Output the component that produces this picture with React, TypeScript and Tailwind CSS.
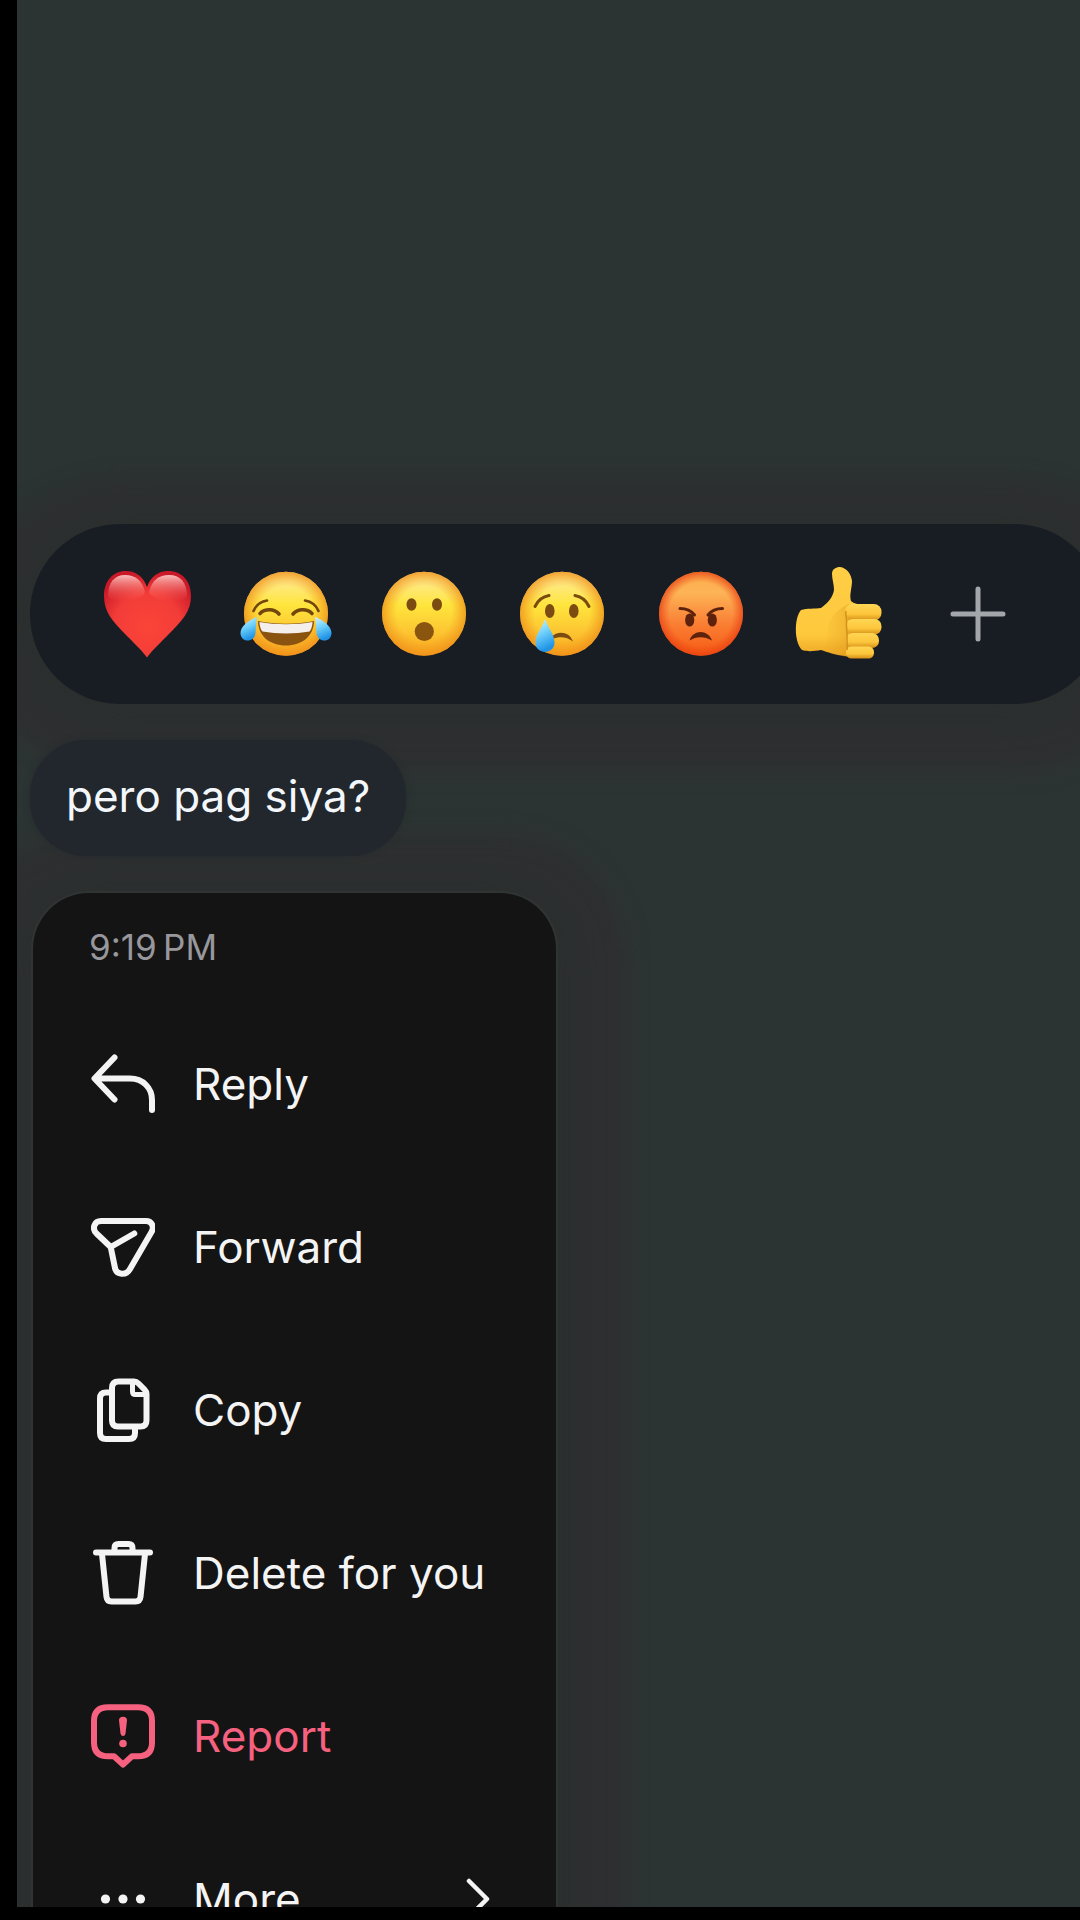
import type { ReactNode } from 'react';
import { clsx } from 'clsx';

function Face({ fill = 'url(#face)', rim = 'url(#faceRim)', children }: { fill?: string; rim?: string; children: ReactNode }) {
  return (
    <svg viewBox="0 0 96 96" className="size-24" aria-hidden="true">
      <circle cx="48" cy="47.700" r="42" fill={fill} />
      <circle cx="48" cy="47.700" r="42" fill={rim} />
      {children}
    </svg>
  );
}

// Gradients shared by all the reaction drawings
function Gradients() {
  return (
    <svg className="absolute size-0" aria-hidden="true">
      <defs>
        <linearGradient id="face" x1="0" y1="0" x2="0" y2="1">
          <stop offset="0" stopColor="#ffe27a" />
          <stop offset="0.12" stopColor="#ffea88" />
          <stop offset="0.4" stopColor="#fee53c" />
          <stop offset="0.7" stopColor="#fdc733" />
          <stop offset="1" stopColor="#f8a41e" />
        </linearGradient>
        <radialGradient id="faceRim">
          <stop offset="0.65" stopColor="#f39a1d" stopOpacity="0" />
          <stop offset="1" stopColor="#ee8d1a" stopOpacity="0.75" />
        </radialGradient>
        <linearGradient id="angry" x1="0" y1="0" x2="0" y2="1">
          <stop offset="0" stopColor="#fbac4c" />
          <stop offset="0.25" stopColor="#fdb457" />
          <stop offset="0.6" stopColor="#fa8136" />
          <stop offset="1" stopColor="#f55a12" />
        </linearGradient>
        <radialGradient id="angryRim">
          <stop offset="0.75" stopColor="#ee4717" stopOpacity="0" />
          <stop offset="1" stopColor="#e83e12" stopOpacity="0.75" />
        </radialGradient>
        <radialGradient id="heart" cx="0.5" cy="0.65" r="0.65">
          <stop offset="0" stopColor="#fb4438" />
          <stop offset="0.6" stopColor="#f23c38" />
          <stop offset="1" stopColor="#c91828" />
        </radialGradient>
        <linearGradient id="gloss" x1="0" y1="0" x2="0" y2="1">
          <stop offset="0" stopColor="#ffd0cc" stopOpacity="0.9" />
          <stop offset="1" stopColor="#ff5a50" stopOpacity="0" />
        </linearGradient>
        <linearGradient id="tear" x1="0" y1="0" x2="0.3" y2="1">
          <stop offset="0" stopColor="#d5f4ff" />
          <stop offset="0.5" stopColor="#6ed0fb" />
          <stop offset="1" stopColor="#1f93e6" />
        </linearGradient>
        <linearGradient id="hand" x1="0" y1="0" x2="0" y2="1">
          <stop offset="0" stopColor="#ffce45" />
          <stop offset="0.75" stopColor="#fec83c" />
          <stop offset="1" stopColor="#eda524" />
        </linearGradient>
        <linearGradient id="finger" x1="0" y1="0" x2="0" y2="1">
          <stop offset="0" stopColor="#ffd654" />
          <stop offset="0.6" stopColor="#fdc63c" />
          <stop offset="1" stopColor="#d68f18" />
        </linearGradient>
        <linearGradient id="palm" x1="0" y1="0" x2="1" y2="0">
          <stop offset="0" stopColor="#e39c1d" stopOpacity="0" />
          <stop offset="1" stopColor="#d58f17" stopOpacity="0.75" />
        </linearGradient>
      </defs>
    </svg>
  );
}

function Heart() {
  return (
    <svg viewBox="0 0 96 96" className="size-24" aria-hidden="true">
      <path
        d="M48 91.500C45 87 38 80 28 70C12 54 5 45 5 30C5 15 14 5 27 5C37 5 44.500 11 48 21C51.500 11 59 5 69 5C83 5 92 15 92 30C92 45 84 54 68 70C58 80 51 87 48 91.500Z"
        fill="url(#heart)"
      />
      <path d="M9 30C9 16 16 9 26 9C36 9 43 14 46 26C42 36 14 40 9 30Z" fill="url(#gloss)" />
      <path d="M50 26C53 14 60 9 70 9C81 9 88 16 88 30C82 40 54 36 50 26Z" fill="url(#gloss)" />
    </svg>
  );
}

function Joy() {
  return (
    <Face>
      <g fill="none" stroke="#72460c" strokeLinecap="round">
        <path d="M15.500 45C18 39 23 35.500 29 34.500" strokeWidth="2.600" />
        <path d="M80.500 45C78 39 73 35.500 67 34.500" strokeWidth="2.600" />
        <path d="M22 47.500C27 42.500 36 42.500 41 48" strokeWidth="3.600" />
        <path d="M55 48C60 42.500 69 42.500 74 47.500" strokeWidth="3.600" />
      </g>
      <path d="M20 55C38 58.500 58 58.500 76 55C76 70 64 79.500 48 79.500C32 79.500 20 70 20 55Z" fill="#8a5410" />
      <path d="M21.500 56C38 59 58 59 74.500 56C74.500 60 73 64 71.500 65.500C57 68 39 68 24.500 65.500C23 64 21.500 60 21.500 56Z" fill="#f4efec" />
      <path d="M19 51C11 54 2.500 60 2.500 67C2.500 77 16.500 77 17.500 67C18 61 18 57 19 51Z" fill="url(#tear)" />
      <path d="M77 51C85 54 93.500 60 93.500 67C93.500 77 79.500 77 78.500 67C78 61 78 57 77 51Z" fill="url(#tear)" />
    </Face>
  );
}

function Wow() {
  return (
    <Face>
      <g fill="#7b4b12">
        <ellipse cx="35.500" cy="38.500" rx="5" ry="6.200" />
        <ellipse cx="61" cy="38.500" rx="5" ry="6.200" />
      </g>
      <circle cx="48.300" cy="65.500" r="9.600" fill="#8a550f" />
    </Face>
  );
}

function Cry() {
  return (
    <Face>
      <g fill="none" stroke="#7b4b0e" strokeWidth="3" strokeLinecap="round">
        <path d="M21 40.500C24 34 29 30.500 35 29.500" />
        <path d="M61 29.500C67 30.500 72 34 75 40.500" />
      </g>
      <g fill="#7b4b12">
        <ellipse cx="35.800" cy="45" rx="4.800" ry="7" />
        <ellipse cx="59.800" cy="45" rx="4.800" ry="7" />
        <path d="M37 71C44 64.500 55 65 59 75.500C53 70.500 45 70 38.500 73Z" />
      </g>
      <path d="M31 53C34 62 40.500 68 40.500 76.500C40.500 89 21.500 89 21.500 76.500C21.500 68 28 62 31 53Z" fill="url(#tear)" />
    </Face>
  );
}

function Angry() {
  return (
    <Face fill="url(#angry)" rim="url(#angryRim)">
      <g fill="none" stroke="#5e220c" strokeWidth="3" strokeLinecap="round">
        <path d="M27 42.500C33 42.500 38 44.500 41.500 49" />
        <path d="M69.500 42.500C63.500 42.500 58.500 44.500 55 49" />
      </g>
      <g fill="#5e220c">
        <ellipse cx="36.700" cy="54" rx="4.600" ry="6.600" />
        <ellipse cx="59.300" cy="54" rx="4.600" ry="6.600" />
        <path d="M36.500 74.500C40 63 55 63 59 74.500C52 70 43 70 36.500 74.500Z" />
      </g>
    </Face>
  );
}

function ThumbsUp() {
  return (
    <svg viewBox="0 0 96 96" className="size-24" aria-hidden="true">
      <path
        d="M41 8C41 3 45 1 49 1C56 2 60 8 61 15C61 22 58 29 60 35C63 38 70 39 76 39V90C68 92 60 91 54 90C45 89 36 86 30 84C24 85 17 86 11 84C3 76 3 52 10 44C16 42 24 43 30 42C37 37 42 31 43 24C43 18 41 13 41 8Z"
        fill="url(#hand)"
      />
      <path d="M38 56C44 46 50 41 58 38L60 91C52 91 40 88 30 84C38 78 36 66 38 56Z" fill="url(#palm)" opacity="0.5" />
      <rect x="54" y="38" width="36.500" height="16.500" rx="7.500" fill="url(#finger)" />
      <rect x="55" y="53" width="35.500" height="15.500" rx="7" fill="url(#finger)" />
      <rect x="55" y="67" width="33" height="15" rx="7" fill="url(#finger)" />
      <rect x="55" y="80.500" width="28" height="12" rx="5.500" fill="url(#finger)" />
      <path d="M55 45C54 50 56 52 55.500 56C55 62 56.500 66 56 70C55.500 76 57 80 56 84" fill="none" stroke="#d39119" strokeWidth="1.500" />
    </svg>
  );
}

function Plus() {
  return (
    <svg viewBox="0 0 96 96" className="size-24 text-[#a3a6ab]" fill="none" stroke="currentColor" strokeWidth="5" strokeLinecap="round" aria-hidden="true">
      <path d="M48 23V73M23 48H73" />
    </svg>
  );
}

const reactions = [
  { label: 'Love', icon: <Heart /> },
  { label: 'Haha', icon: <Joy /> },
  { label: 'Wow', icon: <Wow /> },
  { label: 'Sad', icon: <Cry /> },
  { label: 'Angry', icon: <Angry /> },
  { label: 'Like', icon: <ThumbsUp /> },
  { label: 'More reactions', icon: <Plus /> },
];

function MenuIcon({ children }: { children: ReactNode }) {
  return (
    <svg
      viewBox="0 0 64 64"
      className="size-16 shrink-0"
      fill="none"
      stroke="currentColor"
      strokeWidth="6"
      strokeLinecap="round"
      strokeLinejoin="round"
      aria-hidden="true"
    >
      {children}
    </svg>
  );
}

const menuItems = [
  {
    label: 'Reply',
    icon: <path d="M23.500 5.500L3.500 26.500L23.500 47.500M4 26.500H39C52 26.500 61 36 61 48V58" />,
  },
  {
    label: 'Forward',
    icon: <path d="M19.700 32L5.500 18.500C0.500 13.500 3.500 6 10 6H55C61 6 63.500 12 60.500 17L39 54C35 61 25.500 60 24 53ZL43.300 18.500" />,
  },
  {
    label: 'Copy',
    icon: (
      <>
        <path d="M27.500 3.500H43C45 3.500 46 4 47.500 5.500L53.500 11.500C55 13 55.500 14 55.500 16V42.500Q55.500 48.500 49.500 48.500H27Q21 48.500 21 42.500V10Q21 3.500 27.500 3.500Z" />
        <path d="M41.500 5V13.500Q41.500 16.500 44.500 16.500H54" strokeWidth="5" />
        <path d="M19 14.500H15Q9 14.500 9 20.500V55Q9 61 15 61H38Q44 61 44 55V51" />
      </>
    ),
  },
  {
    label: 'Delete for you',
    icon: (
      <>
        <path d="M5 11.500H59" />
        <path d="M23.500 10V7Q23.500 3 27.500 3H37.500Q41.500 3 41.500 7V10" />
        <path d="M11 13L15.500 56Q16 60.500 20.500 60.500H44.500Q49 60.500 49.500 56L54 13" />
      </>
    ),
  },
  {
    label: 'Report',
    danger: true,
    icon: (
      <>
        <path d="M17 3.200H47Q61 3.200 61 17V38.500Q61 52.300 47 52.300H41L32 60.500L23 52.300H17Q3 52.300 3 38.500V17Q3 3.200 17 3.200Z" />
        <path d="M28 16.500Q28 12.800 32 12.800T36 16.500L34.500 29.500Q34 32 32 32T29.500 29.500Z" fill="currentColor" stroke="none" />
        <circle cx="32" cy="39.500" r="3.800" fill="currentColor" stroke="none" />
      </>
    ),
  },
  {
    label: 'More',
    submenu: true,
    icon: (
      <g fill="currentColor" stroke="none">
        <circle cx="14.500" cy="32" r="4.600" />
        <circle cx="32" cy="32" r="4.600" />
        <circle cx="49.500" cy="32" r="4.600" />
      </g>
    ),
  },
];

export default function App() {
  return (
    <div className="h-screen overflow-hidden bg-black pb-[13px] pl-[17px] font-[Inter,sans-serif]">
      <Gradients />
      <main className="flex h-full flex-col items-start overflow-hidden bg-[#2c3433] pt-[524px] pl-[13px]">
        {/* Reaction bar, runs off the right edge */}
        <div className="-mr-6 grid h-[180px] shrink-0 grid-cols-7 items-center self-stretch rounded-[90px] bg-[#181c23] pr-[57px] pl-12 shadow-[0_4px_40px_12px_rgba(42,47,46,0.9),0_12px_20px_56px_rgba(48,48,49,0.8)]">
          {reactions.map(({ label, icon }) => (
            <button key={label} type="button" aria-label={label} className="flex justify-center">
              {icon}
            </button>
          ))}
        </div>

        <p className="relative z-10 mt-9 shrink-0 rounded-[56px] bg-[#22272d] px-9 pt-[26px] pb-[30px] text-[44px] leading-[60px] text-[#f3f7fb] shadow-[0_0_6px_#262b2e]">
          pero pag siya?
        </p>

        <div className="mt-[37px] ml-[3px] w-[523px] shrink-0 rounded-[56px] bg-[#141414] shadow-[0_0_0_2px_#303534,0_4px_40px_12px_rgba(42,47,46,0.9),0_12px_20px_72px_rgba(48,48,49,0.8)]">
          <p className="px-14 pt-8 pb-[33px] text-[35px] leading-[44px] text-[#98979c]">9:19{'\u2009'}PM</p>
          <ul>
            {menuItems.map(({ label, icon, danger, submenu }) => (
              <li key={label}>
                <button
                  type="button"
                  className={clsx(
                    'flex h-[163px] w-full items-center gap-[38px] pr-[66px] pl-[58px] text-left text-[44px]',
                    danger ? 'text-[#f5617f]' : 'text-[#f4f4f4]'
                  )}
                >
                  <MenuIcon>{icon}</MenuIcon>
                  <span className="grow whitespace-nowrap">{label}</span>
                  {submenu && (
                    <svg viewBox="0 0 24 44" className="h-11 w-6 shrink-0" fill="none" stroke="currentColor" strokeWidth="4.500" strokeLinecap="round" strokeLinejoin="round" aria-hidden="true">
                      <path d="M3 4L21 22L3 40" />
                    </svg>
                  )}
                </button>
              </li>
            ))}
          </ul>
        </div>
      </main>
    </div>
  );
}
